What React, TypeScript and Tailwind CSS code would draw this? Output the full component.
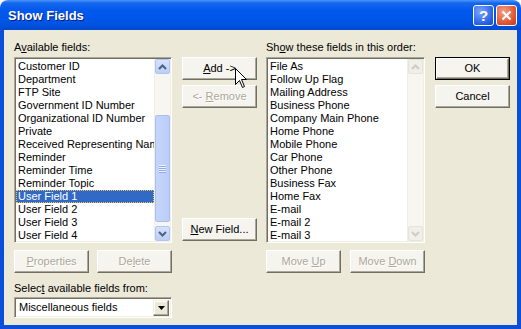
import React from "react";

const available = [
  "Customer ID",
  "Department",
  "FTP Site",
  "Government ID Number",
  "Organizational ID Number",
  "Private",
  "Received Representing Name",
  "Reminder",
  "Reminder Time",
  "Reminder Topic",
  "User Field 1",
  "User Field 2",
  "User Field 3",
  "User Field 4",
];

const shown = [
  "File As",
  "Follow Up Flag",
  "Mailing Address",
  "Business Phone",
  "Company Main Phone",
  "Home Phone",
  "Mobile Phone",
  "Car Phone",
  "Other Phone",
  "Business Fax",
  "Home Fax",
  "E-mail",
  "E-mail 2",
  "E-mail 3",
];

function Btn({
  children,
  disabled,
  isDefault,
  className = "",
}: {
  children: React.ReactNode;
  disabled?: boolean;
  isDefault?: boolean;
  className?: string;
}) {
  const face = (
    <div
      className={`h-full w-full flex items-center justify-center bg-[#F5F4EF] border border-t-white border-l-white border-r-[#716F64] border-b-[#716F64] shadow-[inset_-1px_-1px_0_#ACA899] ${
        disabled ? "text-[#ACA899] [text-shadow:1px_1px_0_#ffffff]" : "text-black"
      }`}
    >
      {children}
    </div>
  );
  return (
    <div className={`h-[23px] w-[75px] shrink-0 ${isDefault ? "border border-black" : ""} ${className}`}>
      {face}
    </div>
  );
}

function Chevron({ up, color }: { up?: boolean; color: string }) {
  return (
    <svg width="9" height="6" viewBox="0 0 9 6">
      <path
        d={up ? "M1 5 L4.5 1.5 L8 5" : "M1 1 L4.5 4.5 L8 1"}
        fill="none"
        stroke={color}
        strokeWidth="2"
      />
    </svg>
  );
}

function ArrowBtn({ up, disabled }: { up?: boolean; disabled?: boolean }) {
  return (
    <div
      className={`h-[15px] w-full flex items-center justify-center rounded-[2px] border ${
        disabled
          ? "bg-[#F0EFE8] border-[#E6E4DA]"
          : "bg-[linear-gradient(to_bottom,#D6E2FD,#BCCEF8)] border-[#B1C5F3]"
      }`}
    >
      <Chevron up={up} color={disabled ? "#CFCDC2" : "#4D6185"} />
    </div>
  );
}

function ScrollBar({ disabled }: { disabled?: boolean }) {
  return (
    <div className="w-[16px] h-full flex flex-col bg-[#F7F6F1] border-l border-[#F0EEE6]">
      <ArrowBtn up disabled={disabled} />
      {disabled ? (
        <div className="flex-1" />
      ) : (
        <>
          <div className="h-[41px]" />
          <div className="h-[107px] rounded-[2px] border border-[#A9BEF1] bg-[linear-gradient(to_right,#C6D5FC,#BACDFA)] flex flex-col items-center justify-center gap-[1px]">
            {[0, 1, 2, 3].map((i) => (
              <div key={i} className="h-[1px] w-[7px] bg-[#EEF3FE] shadow-[0_1px_0_#8FA9E8]" />
            ))}
          </div>
          <div className="flex-1" />
        </>
      )}
      <ArrowBtn disabled={disabled} />
    </div>
  );
}

function ListBox({
  items,
  selected,
  disabledScroll,
  width,
}: {
  items: string[];
  selected?: string;
  disabledScroll?: boolean;
  width: string;
}) {
  return (
    <div
      className={`${width} h-[186px] flex bg-white border border-t-[#ACA899] border-l-[#ACA899] border-r-white border-b-white shadow-[inset_1px_1px_0_#716F64,inset_-1px_-1px_0_#F1EFE2] p-[1px]`}
    >
      <div className="flex-1 min-w-0 overflow-hidden pt-[1px]">
        {items.map((it) => (
          <div
            key={it}
            className={`h-[13px] leading-[13px] pl-[2px] whitespace-nowrap ${
              it === selected
                ? "bg-[#316AC5] text-white outline-1 outline-dotted outline-[#F0C060] -outline-offset-1"
                : "text-black"
            }`}
          >
            {it}
          </div>
        ))}
      </div>
      <ScrollBar disabled={disabledScroll} />
    </div>
  );
}

function Combo() {
  return (
    <div className="w-[158px] h-[21px] flex items-center bg-white border border-t-[#ACA899] border-l-[#ACA899] border-r-white border-b-white shadow-[inset_1px_1px_0_#716F64,inset_-1px_-1px_0_#F1EFE2] p-[2px]">
      <div className="flex-1 pl-[2px] leading-[13px]">Miscellaneous fields</div>
      <div className="w-[16px] h-[16px] flex items-center justify-center bg-[#ECE9D8] border border-t-[#F1EFE2] border-l-[#F1EFE2] border-r-[#716F64] border-b-[#716F64] shadow-[inset_-1px_-1px_0_#ACA899,inset_1px_1px_0_#ffffff]">
        <svg width="7" height="4" viewBox="0 0 7 4">
          <path d="M0 0 L7 0 L3.5 4 Z" fill="#000" />
        </svg>
      </div>
    </div>
  );
}

export default function App() {
  return (
    <div className="w-[521px] h-[329px] bg-white font-['Liberation_Sans',Arial,sans-serif] text-[11px] text-black select-none">
      <div className="relative w-full h-full flex flex-col rounded-t-[8px] overflow-hidden">
        {/* title bar */}
        <div className="h-[30px] shrink-0 flex items-center pl-[8px] pr-[4px] bg-[linear-gradient(to_bottom,#4B95FC_0%,#1667EE_10%,#0058EE_35%,#0055E5_75%,#0049CF_100%)]">
          <div className="flex-1 text-white font-bold text-[13px] [text-shadow:1px_1px_0_#0A1E7A] pt-[1px]">
            Show Fields
          </div>
          <div className="flex gap-[2px]">
            <div className="w-[21px] h-[21px] rounded-[3px] border border-white bg-[radial-gradient(circle_at_35%_30%,#7FA6F8,#2560E8_70%,#1C4CC8)] flex items-center justify-center text-white font-bold text-[15px] leading-none">
              ?
            </div>
            <div className="w-[21px] h-[21px] rounded-[3px] border border-white bg-[radial-gradient(circle_at_35%_30%,#F2A08A,#E0542F_65%,#C23A18)] flex items-center justify-center">
              <svg width="11" height="11" viewBox="0 0 11 11">
                <path d="M1.5 1.5 L9.5 9.5 M9.5 1.5 L1.5 9.5" stroke="#fff" strokeWidth="2.2" />
              </svg>
            </div>
          </div>
        </div>

        {/* body */}
        <div className="flex-1 flex flex-col bg-[#ECE9D8] border-x-4 border-b-4 border-[#0A4EDC] pl-[10px] pt-[11px]">
          <div className="flex">
            {/* left column */}
            <div className="w-[158px] flex flex-col">
              <div className="h-[16px] leading-[13px]">
                A<u>v</u>ailable fields:
              </div>
              <ListBox items={available} selected="User Field 1" width="w-[158px]" />
              <div className="flex gap-[8px] mt-[7px]">
                <Btn disabled>
                  <span>
                    <u>P</u>roperties
                  </span>
                </Btn>
                <Btn disabled>
                  <span>
                    De<u>l</u>ete
                  </span>
                </Btn>
              </div>
              <div className="h-[17px] leading-[13px] mt-[7px] pt-[2px]">
                Selec<u>t</u> available fields from:
              </div>
              <Combo />
            </div>

            {/* middle column */}
            <div className="w-[75px] ml-[10px] pt-[16px] h-[202px] flex flex-col">
              <Btn>
                <span>
                  <u>A</u>dd -&gt;
                </span>
              </Btn>
              <Btn disabled className="mt-[5px]">
                <span>
                  &lt;- <u>R</u>emove
                </span>
              </Btn>
              <div className="flex-1" />
              <Btn className="mb-[2px]">
                <span>
                  <u>N</u>ew Field...
                </span>
              </Btn>
            </div>

            {/* right column */}
            <div className="w-[159px] ml-[9px] flex flex-col">
              <div className="h-[16px] leading-[13px]">
                Sh<u>o</u>w these fields in this order:
              </div>
              <ListBox items={shown} disabledScroll width="w-[159px]" />
              <div className="flex gap-[9px] mt-[7px]">
                <Btn disabled>
                  <span>
                    Move <u>U</u>p
                  </span>
                </Btn>
                <Btn disabled>
                  <span>
                    Move <u>D</u>own
                  </span>
                </Btn>
              </div>
            </div>

            {/* OK / Cancel */}
            <div className="w-[75px] ml-[10px] pt-[16px] flex flex-col">
              <Btn isDefault>OK</Btn>
              <Btn className="mt-[5px]">Cancel</Btn>
            </div>
          </div>
        </div>

        {/* mouse pointer */}
        <svg
          className="absolute left-[235px] top-[68px]"
          width="13"
          height="21"
          viewBox="0 0 13 21"
        >
          <path
            d="M0.5 0.5 L0.5 16.5 L4.5 12.5 L7.5 19.5 L9.5 18.5 L6.5 11.5 L11.5 11.5 Z"
            fill="#fff"
            stroke="#000"
            strokeWidth="1"
          />
        </svg>
      </div>
    </div>
  );
}
